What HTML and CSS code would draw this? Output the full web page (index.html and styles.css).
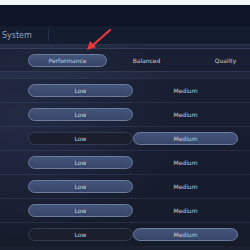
FILE: index.html
```html
<!DOCTYPE html>
<html lang="en">
<head>
    <meta charset="UTF-8">
    <meta name="viewport" content="width=device-width, initial-scale=1.0">
    <title>Graphics Settings</title>
    <link rel="stylesheet" href="styles.css">
</head>
<body>
    <div class="topline"></div>
    <div class="header"></div>
    <div class="tabs">
        <span class="tab">System</span>
        <span class="divider"></span>
    </div>

    <div class="settings">
        <div class="row preset">
            <span class="opt on">Performance</span>
            <span class="opt">Balanced</span>
            <span class="opt">Quality</span>
        </div>
        <div class="list">
            <div class="row"><span class="opt on">Low</span><span class="opt">Medium</span></div>
            <div class="row"><span class="opt on">Low</span><span class="opt">Medium</span></div>
            <div class="row"><span class="opt off">Low</span><span class="opt on">Medium</span></div>
            <div class="row"><span class="opt on">Low</span><span class="opt">Medium</span></div>
            <div class="row"><span class="opt on">Low</span><span class="opt">Medium</span></div>
            <div class="row"><span class="opt on">Low</span><span class="opt">Medium</span></div>
            <div class="row"><span class="opt off">Low</span><span class="opt on">Medium</span></div>
        </div>
    </div>

    <!-- red pointer drawn on top of the screenshot -->
    <svg class="pointer" width="30" height="24" viewBox="0 0 30 24">
        <line x1="26" y1="2" x2="8" y2="18" stroke="#e8383a" stroke-width="2.2" stroke-linecap="round"/>
        <polygon points="3,22 6,13 12,19" fill="#e8383a"/>
    </svg>
</body>
</html>
```

FILE: styles.css
```css
body {
    margin: 0;
    width: 250px;
    height: 250px;
    overflow: hidden;
    position: relative;
    font-family: "DejaVu Sans", sans-serif;
    background:
        radial-gradient(ellipse 160px 120px at 20px 120px, #2c3654 0%, rgba(44,54,84,0) 100%),
        linear-gradient(180deg, #222a40 0%, #1c2236 60%, #1a2030 100%);
}
.topline {
    height: 5px;
    background: #f4f5f7;
}
.header {
    height: 21px;
    background: #0e1526;
}
.tabs {
    height: 18px;
    display: flex;
    align-items: center;
    background: #141c2f;
    border-bottom: 1px solid #2a3349;
}
.tab {
    width: 46px;
    padding-left: 2px;
    font-size: 8px;
    color: #9aa3b5;
}
.divider {
    width: 1px;
    height: 12px;
    background: #26304a;
}
.settings {
    padding-top: 3px;
}
.row {
    display: flex;
    height: 24px;
    align-items: center;
    padding-left: 28px;
    background: rgba(12, 16, 30, 0.3);
    border-top: 1px solid rgba(70, 84, 116, 0.35);
    box-sizing: border-box;
}
.preset {
    border-top: 1px solid rgba(90, 104, 140, 0.4);
    border-bottom: 1px solid rgba(90, 104, 140, 0.3);
}
.list {
    margin-top: 6px;
}
.opt {
    flex: none;
    width: 105px;
    height: 13px;
    line-height: 13px;
    box-sizing: border-box;
    border-radius: 7px;
    text-align: center;
    font-size: 6px;
    color: #c9ced9;
}
.preset .opt {
    width: 79px;
}
.opt.on {
    background: linear-gradient(180deg, #44547a 0%, #37466a 100%);
    border: 1px solid #6c7c9c;
    line-height: 11px;
}
.opt.off {
    background: #1a1e2d;
    border: 1px solid #323a52;
    line-height: 11px;
}
.pointer {
    position: absolute;
    left: 84px;
    top: 28px;
}
```
